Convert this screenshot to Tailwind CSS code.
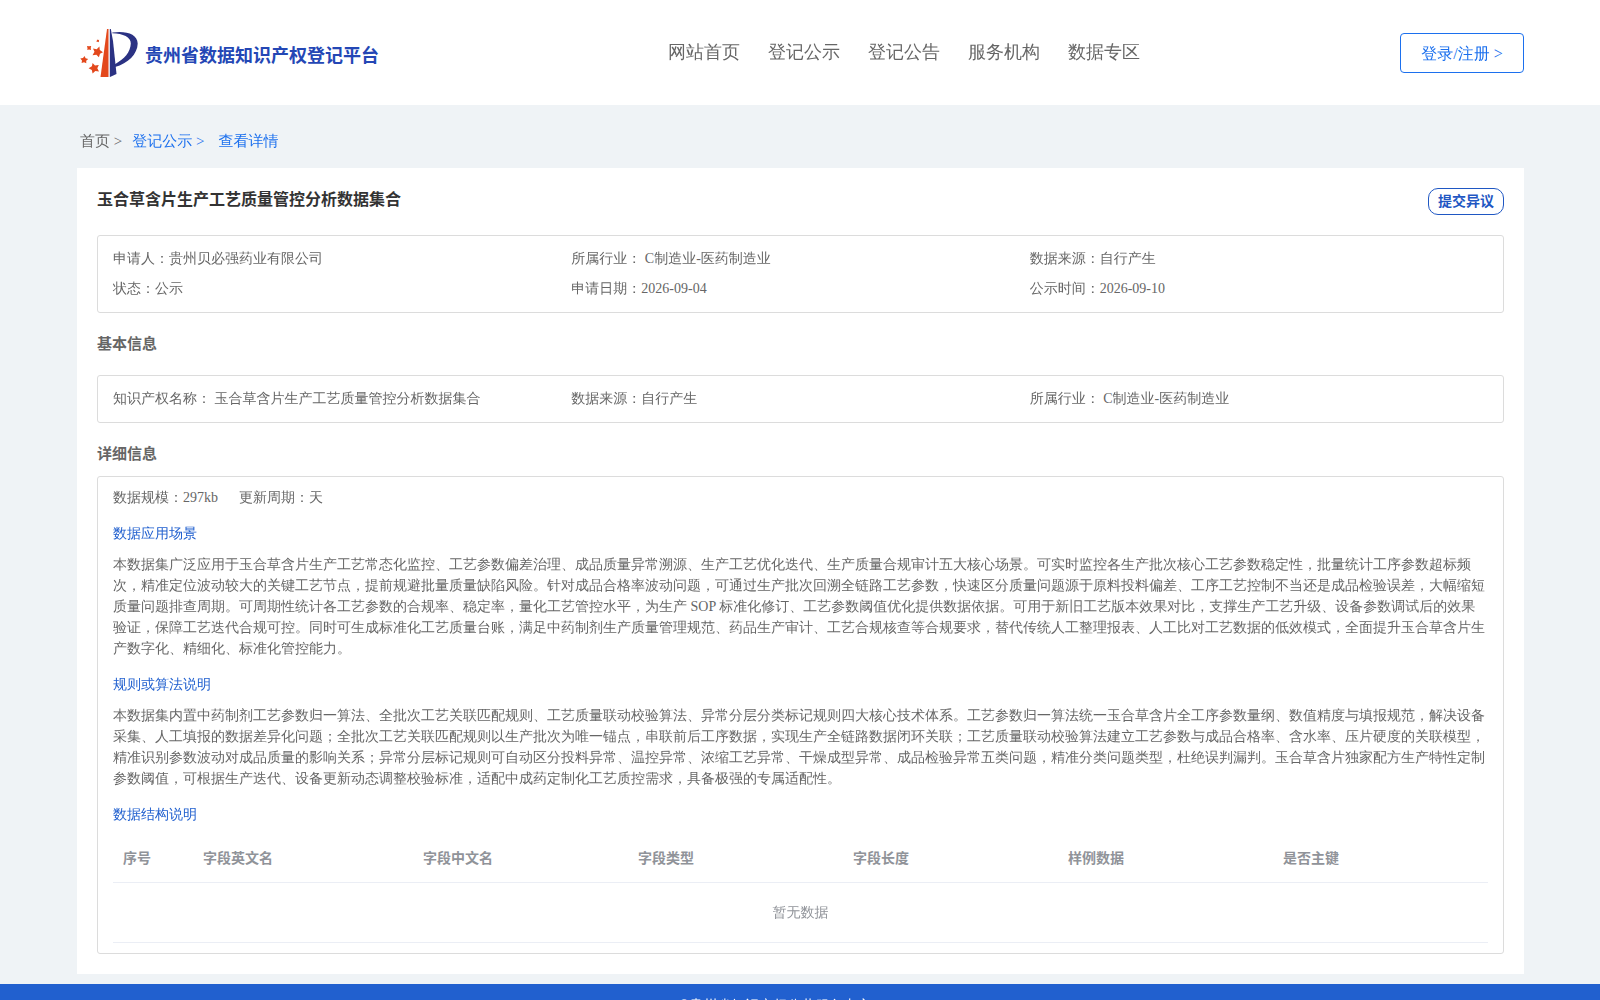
<!DOCTYPE html>
<html lang="zh-CN">
  <head>
    <meta charset="UTF-8" />
    <meta name="viewport" content="width=device-width, initial-scale=1.0" />
    <title>贵州省数据知识产权登记平台</title>
    <script src="https://cdn.jsdelivr.net/npm/@tailwindcss/browser@4"></script>
  </head>
  <body class="bg-[#eff3f6] font-['Liberation_Serif','WenQuanYi_Zen_Hei','Noto_Sans_CJK_SC',serif] text-sm text-[#666] overflow-x-hidden">
    <header class="bg-white h-[105px] pl-[80px] pr-[76px] flex items-center">
      <a href="#" class="flex items-center gap-[7px] w-[588px]">
        <svg class="w-[58px] h-[50px]" viewBox="0 0 58 50" fill="none">
          <path d="M27 1H28.500V49H20.500Z" fill="#e3481c" />
          <path d="M29.800 1H30.800L33 13L36.500 46L30 49H29.800Z" fill="#2b3283" />
          <path d="M32.300 4.500C46 2.500 57.500 6 57.700 15.500C57.500 26 48 35.500 35 39L34.500 36.500C44.500 31 50.500 24 50.800 15.500C51 9 43 5.500 32.300 5.200Z" fill="#2b3283" />
          <path d="M19.400 18.600L19.800 22L23 24.200L20 25.800L18.900 29.200L16.400 26.800L12.500 27.200L14.500 23.800L13 20.500L16.700 21.200Z" fill="#e3481c" />
          <path d="M12.600 35L15 37.500L18.800 37L17.300 40.200L19 43.500L15.300 43L12.600 45.600L11.800 42L8.600 40.200L11.900 38.300Z" fill="#e3481c" />
          <path d="M4.500 28L5.600 30.200L8.200 31L6.200 32.700L6.300 35.200L4 34.200L1.600 35L2 32.500L0.300 30.400L3 30Z" fill="#e3481c" />
          <path d="M7 18L9 18.300L11.200 18L10.700 20L11 22L9 21.500L7.300 22L7.500 20.200Z" fill="#e3481c" />
          <path d="M17 11.500L18 12L19.200 11.800L18.800 13L19 14.200L17.700 13.800L16.500 14L16.800 12.800Z" fill="#e3481c" />
        </svg>
        <span class="pt-[6px] text-lg font-bold font-['Liberation_Serif','Noto_Sans_CJK_SC',serif] text-[#2447b5]">贵州省数据知识产权登记平台</span>
      </a>
      <nav class="flex gap-7 pb-[2px] text-lg">
        <a href="#">网站首页</a>
        <a href="#">登记公示</a>
        <a href="#">登记公告</a>
        <a href="#">服务机构</a>
        <a href="#">数据专区</a>
      </nav>
      <button class="ml-auto w-[124px] h-10 pt-[2px] border border-[#1c70ee] rounded text-base text-[#1c70ee]">登录/注册 &gt;</button>
    </header>

    <main class="pl-[77px] pr-[76px] pb-[10px]">
      <!-- breadcrumb -->
      <div class="h-[63px] pt-[25px] pl-[3px] text-[15px] leading-[22px] flex">
        <a href="#">首页 &gt;</a>
        <a href="#" class="ml-[10px] text-[#1c70ee]">登记公示 &gt;</a>
        <a href="#" class="ml-[14px] text-[#1c70ee]">查看详情</a>
      </div>

      <div class="bg-white p-5">
        <div class="flex justify-between items-start">
          <h1 class="text-base font-bold font-['Liberation_Serif','Noto_Sans_CJK_SC',serif] text-[#333]">玉合草含片生产工艺质量管控分析数据集合</h1>
          <button class="w-[76px] h-[27px] border border-[#1f57c3] rounded-[10px] font-bold font-['Liberation_Serif','Noto_Sans_CJK_SC',serif] text-[#1f57c3]">提交异议</button>
        </div>

        <div class="mt-5 px-[15px] py-2 border border-[#dcdcdc] rounded-[3px] grid grid-cols-3 leading-[30px]">
          <div>申请人：贵州贝必强药业有限公司</div>
          <div>所属行业： C制造业-医药制造业</div>
          <div>数据来源：自行产生</div>
          <div>状态：公示</div>
          <div>申请日期：2026-09-04</div>
          <div>公示时间：2026-09-10</div>
        </div>

        <h2 class="mt-5 text-[15px] leading-[22px] font-bold font-['Liberation_Serif','Noto_Sans_CJK_SC',serif]">基本信息</h2>
        <div class="mt-5 px-[15px] py-2 border border-[#dcdcdc] rounded-[3px] grid grid-cols-3 leading-[30px]">
          <div>知识产权名称： 玉合草含片生产工艺质量管控分析数据集合</div>
          <div>数据来源：自行产生</div>
          <div>所属行业： C制造业-医药制造业</div>
        </div>

        <h2 class="mt-5 text-[15px] leading-[22px] font-bold font-['Liberation_Serif','Noto_Sans_CJK_SC',serif]">详细信息</h2>
        <div class="mt-[11px] px-[15px] py-[10px] border border-[#dcdcdc] rounded-[3px] leading-[21px]">
          <div class="flex gap-[21px]">
            <span>数据规模：297kb</span>
            <span>更新周期：天</span>
          </div>
          <h3 class="mt-[15px] text-[#2160cf]">数据应用场景</h3>
          <p class="mt-[10px]">本数据集广泛应用于玉合草含片生产工艺常态化监控、工艺参数偏差治理、成品质量异常溯源、生产工艺优化迭代、生产质量合规审计五大核心场景。可实时监控各生产批次核心工艺参数稳定性，批量统计工序参数超标频次，精准定位波动较大的关键工艺节点，提前规避批量质量缺陷风险。针对成品合格率波动问题，可通过生产批次回溯全链路工艺参数，快速区分质量问题源于原料投料偏差、工序工艺控制不当还是成品检验误差，大幅缩短质量问题排查周期。可周期性统计各工艺参数的合规率、稳定率，量化工艺管控水平，为生产 SOP 标准化修订、工艺参数阈值优化提供数据依据。可用于新旧工艺版本效果对比，支撑生产工艺升级、设备参数调试后的效果验证，保障工艺迭代合规可控。同时可生成标准化工艺质量台账，满足中药制剂生产质量管理规范、药品生产审计、工艺合规核查等合规要求，替代传统人工整理报表、人工比对工艺数据的低效模式，全面提升玉合草含片生产数字化、精细化、标准化管控能力。</p>
          <h3 class="mt-[15px] text-[#2160cf]">规则或算法说明</h3>
          <p class="mt-[10px]">本数据集内置中药制剂工艺参数归一算法、全批次工艺关联匹配规则、工艺质量联动校验算法、异常分层分类标记规则四大核心技术体系。工艺参数归一算法统一玉合草含片全工序参数量纲、数值精度与填报规范，解决设备采集、人工填报的数据差异化问题；全批次工艺关联匹配规则以生产批次为唯一锚点，串联前后工序数据，实现生产全链路数据闭环关联；工艺质量联动校验算法建立工艺参数与成品合格率、含水率、压片硬度的关联模型，精准识别参数波动对成品质量的影响关系；异常分层标记规则可自动区分投料异常、温控异常、浓缩工艺异常、干燥成型异常、成品检验异常五类问题，精准分类问题类型，杜绝误判漏判。玉合草含片独家配方生产特性定制参数阈值，可根据生产迭代、设备更新动态调整校验标准，适配中成药定制化工艺质控需求，具备极强的专属适配性。</p>
          <h3 class="mt-[15px] text-[#2160cf]">数据结构说明</h3>
          <table class="mt-[10px] w-full table-fixed text-[#909399]">
            <thead>
              <tr class="h-[47px] text-left font-['Liberation_Serif','Noto_Sans_CJK_SC',serif] border-b border-[#ebeef5]">
                <th class="w-20 px-[10px]">序号</th>
                <th class="w-[220px] px-[10px]">字段英文名</th>
                <th class="px-[10px]">字段中文名</th>
                <th class="px-[10px]">字段类型</th>
                <th class="px-[10px]">字段长度</th>
                <th class="px-[10px]">样例数据</th>
                <th class="px-[10px]">是否主键</th>
              </tr>
            </thead>
            <tbody>
              <tr class="h-[60px] border-b border-[#ebeef5]">
                <td colspan="7" class="text-center">暂无数据</td>
              </tr>
            </tbody>
          </table>
        </div>
      </div>
    </main>

    <footer class="h-[120px] pt-[11px] pr-[50px] bg-[#2160cf] text-center text-white leading-[22px]">©贵州省知识产权公共服务中心</footer>
  </body>
</html>
